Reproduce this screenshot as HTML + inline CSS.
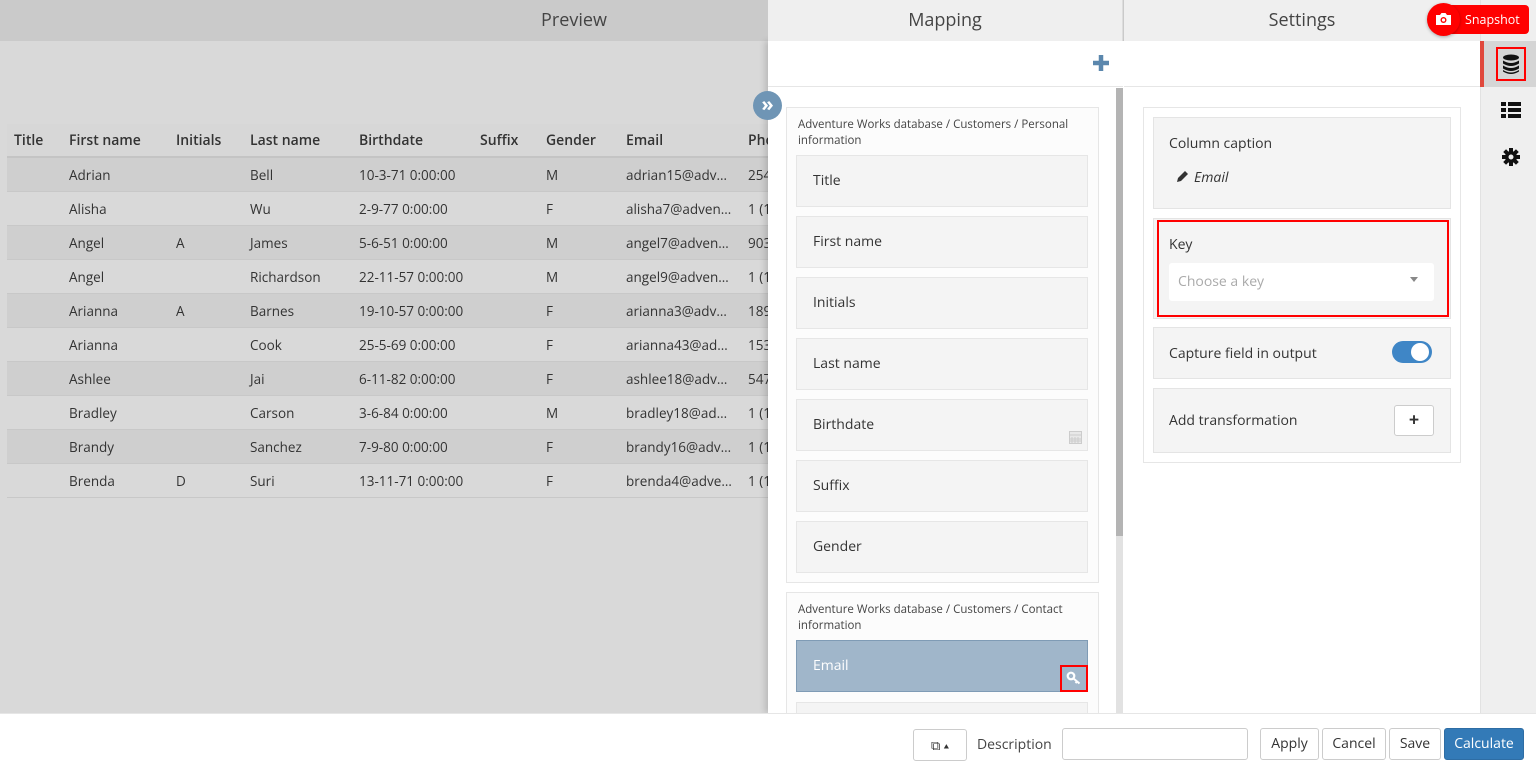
<!DOCTYPE html>
<html><head><meta charset="utf-8"><style>
*{box-sizing:border-box;margin:0;padding:0}
body{width:1536px;height:769px;overflow:hidden;position:relative;font-family:"Open Sans","Liberation Sans",sans-serif;color:#333;background:#d9d9d9}
.a{position:absolute}
.hd{top:0;height:41px;font-size:18px;color:#444;text-align:center;line-height:41px}
.th,.td{position:absolute;font-size:14px;white-space:nowrap}
.th{font-weight:600;color:#333}
.item{position:absolute;left:796px;width:292px;height:52px;background:#f4f4f4;border:1px solid #e6e6e6;font-size:14px;color:#333;padding-left:16px;line-height:50px}
.grp{position:absolute;left:786px;width:313px;background:#fcfcfc;border:1px solid #e6e6e6}
.glab{position:absolute;left:798px;font-size:11.5px;color:#444;line-height:16px;width:280px}
.box{position:absolute;left:1153px;width:298px;background:#f4f4f4;border:1px solid #e4e4e4}
.btn{position:absolute;top:728px;height:32px;border:1px solid #ccc;border-radius:3px;background:#fff;font-size:14px;color:#333;text-align:center;line-height:30px}
</style></head><body>
<div class="a hd" style="left:0;width:1148px;background:#cacaca;color:#444">Preview</div>
<div class="a" style="left:7px;top:124px;width:761px;height:34px;background:#d7d7d7;border-bottom:2px solid #c4c4c4"></div>
<div class="th" style="left:14px;top:131px">Title</div><div class="th" style="left:69px;top:131px">First name</div><div class="th" style="left:176px;top:131px">Initials</div><div class="th" style="left:250px;top:131px">Last name</div><div class="th" style="left:359px;top:131px">Birthdate</div><div class="th" style="left:480px;top:131px">Suffix</div><div class="th" style="left:546px;top:131px">Gender</div><div class="th" style="left:626px;top:131px">Email</div><div class="th" style="left:748px;top:131px">Pho</div>
<div id="rows"></div>
<script>
var d=[["Adrian","","Bell","10-3-71 0:00:00","M","adrian15@adventure","254"],["Alisha","","Wu","2-9-77 0:00:00","F","alisha7@adventure","1 (1"],["Angel","A","James","5-6-51 0:00:00","M","angel7@adventure","903"],["Angel","","Richardson","22-11-57 0:00:00","M","angel9@adventure","1 (1"],["Arianna","A","Barnes","19-10-57 0:00:00","F","arianna3@adventure","189"],["Arianna","","Cook","25-5-69 0:00:00","F","arianna43@adventure","153"],["Ashlee","","Jai","6-11-82 0:00:00","F","ashlee18@adventure","547"],["Bradley","","Carson","3-6-84 0:00:00","M","bradley18@adventure","1 (1"],["Brandy","","Sanchez","7-9-80 0:00:00","F","brandy16@adventure","1 (1"],["Brenda","D","Suri","13-11-71 0:00:00","F","brenda4@adventure","1 (1"]];
var h="",xs=[69,176,250,359,546,626,748];
d.forEach(function(r,i){var t=158+i*34;h+='<div class="a" style="left:7px;top:'+t+'px;width:761px;height:34px;background:'+(i%2?'#d9d9d9':'#cfcfcf')+';border-bottom:1px solid #c8c8c8"></div>';r.forEach(function(c,j){var ex=j==5?';width:106px;overflow:hidden;text-overflow:ellipsis':'';h+='<div class="td" style="left:'+xs[j]+'px;top:'+(t+8)+'px;font-size:13.5px'+ex+'">'+c+'</div>'})});
document.getElementById('rows').innerHTML=h;
</script>
<!-- Mapping -->
<div class="a" style="left:768px;top:41px;width:356px;height:672px;background:#fff;box-shadow:-3px 0 6px rgba(0,0,0,.15)"></div>
<div class="a hd" style="left:768px;width:355px;background:#efefef;border-right:1px solid #ddd">Mapping</div>
<div class="a" style="left:768px;top:86px;width:355px;height:1px;background:#e6e6e6"></div>
<svg class="a" style="left:1091px;top:53px" width="20" height="20"><path d="M10 2v16M2 10h16" stroke="#5b87ad" stroke-width="4.5"/></svg>
<div class="a" style="left:1116px;top:88px;width:7px;height:625px;background:#e2e2e2"></div>
<div class="a" style="left:1116px;top:88px;width:7px;height:448px;background:#b4b4b4"></div>
<div class="a" style="left:753px;top:91px;width:29px;height:29px;border-radius:50%;background:#6f95b5;color:#fff;font-size:20px;text-align:center;line-height:26px;font-weight:bold">»</div>
<div class="grp" style="top:107px;height:476px"></div>
<div class="glab" style="top:117px">Adventure Works database / Customers / Personal information</div>
<div class="item" style="top:155px">Title</div><div class="item" style="top:216px">First name</div><div class="item" style="top:277px">Initials</div><div class="item" style="top:338px">Last name</div><div class="item" style="top:399px">Birthdate</div><div class="item" style="top:460px">Suffix</div><div class="item" style="top:521px">Gender</div>
<svg class="a" style="left:1069px;top:431px" width="13" height="13"><rect x="0.5" y="0.5" width="12" height="12" fill="#e8e8e8" stroke="#ccc"/><path d="M1 4h11M3 6v6M6 6v6M9 6v6M1 8h11M1 10h11" stroke="#ccc"/></svg>
<div class="grp" style="top:592px;height:130px"></div>
<div class="glab" style="top:602px">Adventure Works database / Customers / Contact information</div>
<div class="item" style="top:640px;background:#a0b6ca;border-color:#7f9bb5;color:#fff">Email</div>
<div class="a" style="left:1060px;top:665px;width:28px;height:27px;border:2px solid #f00"></div>
<svg class="a" style="left:1066px;top:671px" width="16" height="14"><circle cx="5" cy="5" r="3.3" fill="none" stroke="#fff" stroke-width="2.2"/><path d="M7.5 7.5l6 5M11 10.5l-1.5 1.5" stroke="#fff" stroke-width="2"/></svg>
<div class="item" style="top:702px;height:20px"></div>
<!-- Settings -->
<div class="a" style="left:1124px;top:41px;width:357px;height:672px;background:#fff"></div>
<div class="a hd" style="left:1124px;width:356px;background:#efefef">Settings</div>
<div class="a" style="left:1124px;top:86px;width:356px;height:1px;background:#e6e6e6"></div>
<div class="a" style="left:1143px;top:107px;width:318px;height:356px;border:1px solid #e6e6e6;background:#fff"></div>
<div class="box" style="top:117px;height:92px"></div>
<div class="a" style="left:1169px;top:134px;font-size:14px">Column caption</div>
<svg class="a" style="left:1176px;top:170px" width="13" height="13"><path d="M1 12l1-4 7-7 3 3-7 7z" fill="#333"/></svg>
<div class="a" style="left:1194px;top:168px;font-size:14px;font-style:italic">Email</div>
<div class="box" style="top:218px;height:101px"></div>
<div class="a" style="left:1157px;top:220px;width:292px;height:97px;border:2px solid #f00"></div>
<div class="a" style="left:1169px;top:235px;font-size:14px">Key</div>
<div class="a" style="left:1169px;top:263px;width:265px;height:38px;background:#fff;border-radius:3px;font-size:14px;color:#aaa;padding-left:9px;line-height:38px">Choose a key</div>
<div class="a" style="left:1410px;top:277px;border:4px solid transparent;border-top:5px solid #888"></div>
<div class="box" style="top:327px;height:52px"></div>
<div class="a" style="left:1169px;top:344px;font-size:14px">Capture field in output</div>
<div class="a" style="left:1392px;top:341px;width:40px;height:22px;border-radius:11px;background:#3f86c6"></div>
<div class="a" style="left:1411px;top:343px;width:18px;height:18px;border-radius:50%;background:#fff"></div>
<div class="box" style="top:388px;height:65px"></div>
<div class="a" style="left:1169px;top:411px;font-size:14px">Add transformation</div>
<div class="a" style="left:1394px;top:405px;width:40px;height:31px;background:#fff;border:1px solid #ccc;border-radius:3px;text-align:center;line-height:28px;font-size:18px;font-weight:bold">+</div>
<!-- Sidebar -->
<div class="a" style="left:1480px;top:0;width:56px;height:713px;background:#efefef;border-left:1px solid #e2e2e2"></div>
<div class="a" style="left:1480px;top:41px;width:56px;height:46px;background:#d5d5d5;border-left:4px solid #e0483c"></div>
<div class="a" style="left:1496px;top:47px;width:30px;height:34px;border:2px solid #f00"></div>
<svg class="a" style="left:1501px;top:54px" width="20" height="21"><ellipse cx="10" cy="3.5" rx="8" ry="3" fill="#111"/><path d="M2 6.5q8 5 16 0v3q-8 5-16 0zM2 11.5q8 5 16 0v3q-8 5-16 0zM2 16q8 5 16 0v1.5q-8 5-16 0z" fill="#111"/></svg>
<svg class="a" style="left:1501px;top:102px" width="20" height="16"><path d="M0 0h5v4H0zM7 0h13v4H7zM0 6h5v4H0zM7 6h13v4H7zM0 12h5v4H0zM7 12h13v4H7z" fill="#111"/></svg>
<svg class="a" style="left:1502px;top:148px" width="18" height="18" viewBox="0 0 18 18"><g fill="#111"><circle cx="9" cy="9" r="6"/><rect x="7" y="0" width="4" height="18"/><rect x="0" y="7" width="18" height="4"/><rect x="7" y="0" width="4" height="18" transform="rotate(45 9 9)"/><rect x="7" y="0" width="4" height="18" transform="rotate(-45 9 9)"/></g><circle cx="9" cy="9" r="2.5" fill="#efefef"/></svg>
<!-- Snapshot -->
<div class="a" style="left:1436px;top:5px;width:93px;height:29px;background:#f00;border-radius:4px;color:#fff;font-size:12.5px;line-height:29px;padding-left:29px">Snapshot</div>
<div class="a" style="left:1427px;top:3px;width:33px;height:33px;border-radius:50%;background:#f00;box-shadow:0 1px 3px rgba(0,0,0,.3)"></div>
<svg class="a" style="left:1435px;top:12px" width="17" height="14"><path d="M1 3h4l1.5-2h4L12 3h4v10H1z" fill="#fff"/><circle cx="8.5" cy="8" r="3" fill="#f00"/><circle cx="8.5" cy="8" r="1.6" fill="#fff"/></svg>
<!-- Bottom -->
<div class="a" style="left:0;top:713px;width:1536px;height:56px;background:#fff;border-top:1px solid #e6e6e6"></div>
<div class="btn" style="left:913px;width:54px;top:729px"><span style="font-size:13px">⧉ ▴</span></div>
<div class="a" style="left:977px;top:735px;font-size:14px;color:#444">Description</div>
<div class="a" style="left:1062px;top:728px;width:186px;height:32px;border:1px solid #ccc;border-radius:3px"></div>
<div class="btn" style="left:1260px;width:59px">Apply</div>
<div class="btn" style="left:1322px;width:64px">Cancel</div>
<div class="btn" style="left:1389px;width:52px">Save</div>
<div class="btn" style="left:1444px;width:80px;background:#337ab7;border-color:#2e6da4;color:#fff">Calculate</div>
</body></html>
